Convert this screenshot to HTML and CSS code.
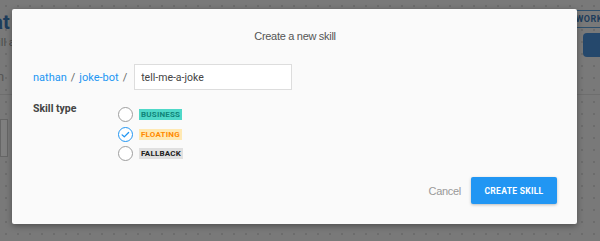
FILE: index.html
```html
<!DOCTYPE html>
<html lang="en">
<head>
    <meta charset="UTF-8">
    <title>Create a new skill</title>
    <link rel="stylesheet" href="styles.css">
</head>
<body>
    <div class="page">
        <div class="page-head">
            <div class="page-title">
                <h1 class="app-name">Chat</h1>
                <p class="app-sub">Skill archives</p>
            </div>
            <div class="page-actions">
                <span class="ghost-btn">Settings</span>
                <span class="ghost-btn small">+</span>
                <span class="ghost-btn primary">WORK</span>
            </div>
        </div>
        <div class="page-tab">Skills in</div>
        <div class="page-body">
            <div class="side-card"></div>
            <div class="fab"></div>
        </div>
    </div>

    <div class="overlay">
        <div class="modal">
            <h2 class="modal-title">Create a new skill</h2>

            <div class="path-row">
                <a class="crumb" href="#">nathan</a>
                <span class="sep">/</span>
                <a class="crumb" href="#">joke-bot</a>
                <span class="sep">/</span>
                <input class="skill-input" type="text" value="tell-me-a-joke">
            </div>

            <div class="type-row">
                <div class="type-label">Skill type</div>
                <div class="type-options">
                    <label class="option">
                        <span class="radio"></span>
                        <span class="tag tag-business">BUSINESS</span>
                    </label>
                    <label class="option">
                        <span class="radio checked">
                            <svg viewBox="0 0 16 16" width="15" height="15"><path d="M4.4 8.4l2.3 2.1 4.6-4.6" fill="none" stroke="#2196f3" stroke-width="1.4" stroke-linecap="round" stroke-linejoin="round"/></svg>
                        </span>
                        <span class="tag tag-floating">FLOATING</span>
                    </label>
                    <label class="option">
                        <span class="radio"></span>
                        <span class="tag tag-fallback">FALLBACK</span>
                    </label>
                </div>
            </div>

            <div class="modal-footer">
                <button type="button" class="cancel-btn">Cancel</button>
                <button type="button" class="create-btn">CREATE SKILL</button>
            </div>
        </div>
    </div>
</body>
</html>
```

FILE: styles.css
```css
* {
    margin: 0;
    padding: 0;
    box-sizing: border-box;
}

body {
    font-family: Roboto, 'Liberation Sans', sans-serif;
    width: 600px;
    height: 241px;
    overflow: hidden;
    background-color: #f2f2f2;
    background-image: radial-gradient(#d8d8d8 1px, transparent 1px);
    background-size: 12px 12px;
    position: relative;
}

/* page behind the dialog */
.page {
    height: 100%;
}

.page-head {
    display: flex;
    justify-content: space-between;
    align-items: flex-start;
    padding-top: 10px;
}

.page-title {
    margin-left: -32px;
}

.app-name {
    font-size: 20px;
    font-weight: 700;
    color: #3d7ab8;
    line-height: 24px;
}

.app-sub {
    font-size: 11px;
    color: #999;
    margin-top: 2px;
    margin-left: 18px;
}

.page-actions {
    display: flex;
    gap: 4px;
    margin-right: -14px;
}

.ghost-btn {
    border: 1px solid #999;
    border-radius: 2px;
    font-size: 9px;
    font-weight: 700;
    color: #666;
    padding: 3px 10px;
    letter-spacing: 0.5px;
}

.ghost-btn.small {
    padding: 3px 6px;
}

.ghost-btn.primary {
    border-color: #5a9fd8;
    color: #3d7ab8;
}

.page-tab {
    font-size: 13px;
    color: #aaa;
    margin-top: 20px;
    margin-left: -40px;
    padding-bottom: 10px;
    border-bottom: 1px solid #ddd;
}

.page-body {
    display: flex;
    justify-content: space-between;
    padding-top: 16px;
}

.side-card {
    width: 8px;
    height: 38px;
    background: #fff;
    border: 1px solid #ccc;
    margin-top: 8px;
}

.fab {
    width: 26px;
    height: 24px;
    background: #4a90d9;
    border-radius: 4px;
    margin-right: -9px;
    margin-top: -78px;
}

/* dialog */
.overlay {
    position: absolute;
    inset: 0;
    background: rgba(0, 0, 0, 0.5);
    padding: 9px 23px 0 12px;
}

.modal {
    width: 565px;
    height: 215px;
    background: #fafafa;
    border-radius: 2px;
    box-shadow: 0 2px 6px rgba(0, 0, 0, 0.35);
    padding: 20px 20px 20px 21px;
    display: flex;
    flex-direction: column;
}

.modal-title {
    font-family: 'Liberation Sans', Arial, sans-serif;
    font-size: 11px;
    font-weight: 400;
    letter-spacing: -0.3px;
    color: #555;
    text-align: center;
    line-height: 14px;
}

.path-row {
    display: flex;
    align-items: center;
    margin-top: 21px;
    font-size: 11px;
}

.crumb {
    color: #2196f3;
    text-decoration: none;
}

.sep {
    color: #666;
    margin: 0 4px;
}

.skill-input {
    width: 158px;
    height: 26px;
    border: 1px solid #ddd;
    background: #fff;
    padding: 0 6px;
    font-family: Roboto, sans-serif;
    font-size: 10.5px;
    color: #444;
    margin-left: 3px;
}

.type-row {
    display: flex;
    margin-top: 12px;
}

.type-label {
    width: 85px;
    font-size: 10.5px;
    font-weight: 700;
    color: #444;
    line-height: 14px;
}

.type-options {
    display: flex;
    flex-direction: column;
    gap: 4px;
    padding-top: 5px;
}

.option {
    display: flex;
    align-items: center;
    gap: 6px;
    height: 15.5px;
}

.radio {
    width: 15px;
    height: 15px;
    border: 1px solid #9e9e9e;
    border-radius: 50%;
    background: #fff;
    display: flex;
    align-items: center;
    justify-content: center;
}

.radio.checked {
    border-color: #2196f3;
}

.radio svg {
    flex: none;
}

.tag {
    font-size: 8px;
    font-weight: 700;
    line-height: 11px;
    padding: 0 2px;
    letter-spacing: 0.2px;
}

.tag-business {
    background: #4fd8c8;
    color: #0f8479;
}

.tag-floating {
    background: #ffe9b3;
    color: #ff8a00;
}

.tag-fallback {
    background: #e0e0e0;
    color: #222;
}

.modal-footer {
    margin-top: auto;
    display: flex;
    justify-content: flex-end;
    align-items: center;
    gap: 10px;
}

.cancel-btn {
    background: none;
    border: none;
    font-family: 'Liberation Sans', Arial, sans-serif;
    font-size: 11px;
    letter-spacing: -0.3px;
    color: #999;
}

.create-btn {
    width: 86px;
    height: 27px;
    background: #2196f3;
    color: #fff;
    border: none;
    border-radius: 2px;
    font-family: Roboto, sans-serif;
    font-size: 8.5px;
    font-weight: 700;
    letter-spacing: 0.3px;
    box-shadow: 0 1px 3px rgba(0, 0, 0, 0.25);
}
```
